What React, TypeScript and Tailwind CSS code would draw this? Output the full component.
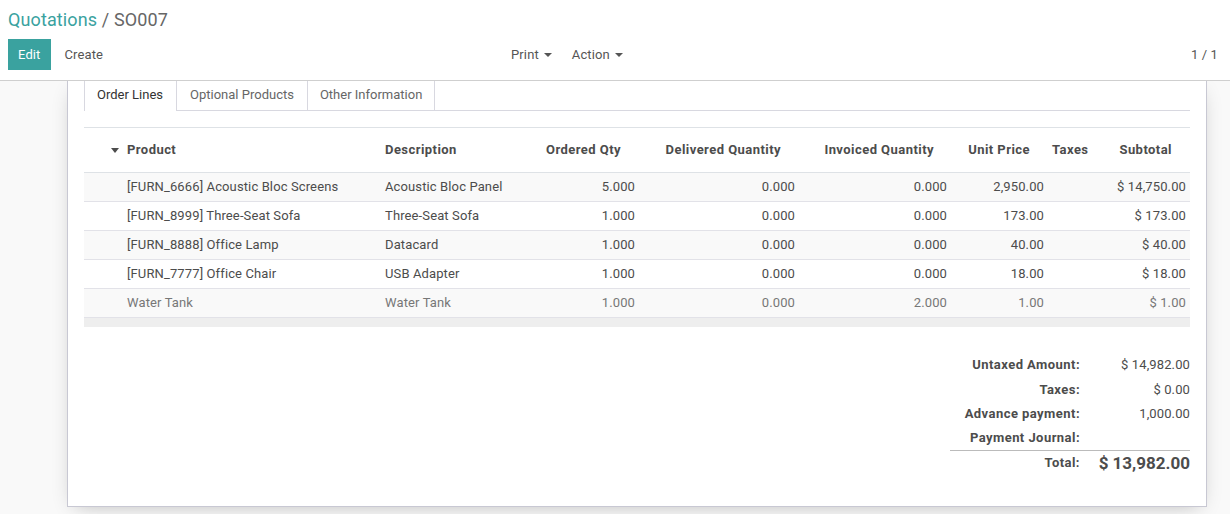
import React from 'react';

type Line = {
  product: string;
  description: string;
  ordered: string;
  delivered: string;
  invoiced: string;
  price: string;
  subtotal: string;
  muted?: boolean;
};

const lines: Line[] = [
  { product: '[FURN_6666] Acoustic Bloc Screens', description: 'Acoustic Bloc Panel', ordered: '5.000', delivered: '0.000', invoiced: '0.000', price: '2,950.00', subtotal: '$ 14,750.00' },
  { product: '[FURN_8999] Three-Seat Sofa', description: 'Three-Seat Sofa', ordered: '1.000', delivered: '0.000', invoiced: '0.000', price: '173.00', subtotal: '$ 173.00' },
  { product: '[FURN_8888] Office Lamp', description: 'Datacard', ordered: '1.000', delivered: '0.000', invoiced: '0.000', price: '40.00', subtotal: '$ 40.00' },
  { product: '[FURN_7777] Office Chair', description: 'USB Adapter', ordered: '1.000', delivered: '0.000', invoiced: '0.000', price: '18.00', subtotal: '$ 18.00' },
  { product: 'Water Tank', description: 'Water Tank', ordered: '1.000', delivered: '0.000', invoiced: '2.000', price: '1.00', subtotal: '$ 1.00', muted: true },
];

const cols = 'grid grid-cols-[293px_158px_104px_160px_152px_97px_46px_96px]';

const Caret = () => (
  <span className="inline-block w-0 h-0 border-t-[4px] border-x-[4px] border-x-transparent border-t-[#555] ml-[5px] align-middle" />
);

const totals = [
  { label: 'Untaxed Amount:', value: '$ 14,982.00' },
  { label: 'Taxes:', value: '$ 0.00' },
  { label: 'Advance payment:', value: '1,000.00' },
  { label: 'Payment Journal:', value: '' },
];

export default function App() {
  return (
    <div className="h-[514px] flex flex-col overflow-hidden bg-white font-['Roboto',sans-serif] text-[13px] tracking-[0.12px] text-[#4c4c4c]">
      {/* Control panel */}
      <div className="h-[81px] shrink-0 border-b border-[#cfcfcf] px-2 bg-white">
        <div className="pt-[8px] text-[18px] leading-[24px]">
          <span className="text-[#3aa29f]">Quotations</span>
          <span className="text-[#666]"> / SO007</span>
        </div>
        <div className="mt-[7px] flex items-center h-[31px]">
          <div className="flex items-center w-[493px]">
            <button className="h-[31px] px-[10px] bg-[#3aa29f] text-white">Edit</button>
            <button className="h-[31px] px-[14px] text-[#555]">Create</button>
          </div>
          <div className="flex items-center text-[#555]">
            <button className="h-[31px] px-[10px] flex items-center">Print<Caret /></button>
            <button className="h-[31px] px-[10px] flex items-center">Action<Caret /></button>
          </div>
          <div className="ml-auto pr-[4px] text-[#555]">1 / 1</div>
        </div>
      </div>

      {/* Form view */}
      <div className="flex-1 overflow-hidden bg-[#f9f9f9]">
        <div className="ml-[67px] w-[1140px] bg-white border-x border-b border-[#c8c8d3] shadow-[0_5px_20px_-8px_rgba(0,0,0,0.3)] px-4 pb-[31px]">
          {/* Tabs */}
          <div className="flex h-[30px] tracking-normal">
            <div className="pl-[12px] pr-[13px] flex items-center pb-[2px] border-x border-[#d8d8e0] text-[#333] bg-white">Order Lines</div>
            <div className="px-[13px] flex items-center pb-[2px] border-r border-b border-[#d8d8e0] text-[#666]">Optional Products</div>
            <div className="px-[12px] flex items-center pb-[2px] border-r border-b border-[#d8d8e0] text-[#666]">Other Information</div>
            <div className="flex-1 border-b border-[#d8d8e0]" />
          </div>

          {/* Order lines */}
          <div className="mt-[16px]">
            <div className={`${cols} h-[46px] items-center border-y border-[#dee2e6] font-bold tracking-[0.45px]`}>
              <div className="pl-[27px] flex items-center">
                <span className="inline-block w-0 h-0 border-t-[5px] border-x-[4px] border-x-transparent border-t-[#4c4c4c] mr-[8px]" />
                Product
              </div>
              <div className="pl-2">Description</div>
              <div className="text-right pr-[18px]">Ordered Qty</div>
              <div className="text-right pr-[18px]">Delivered Quantity</div>
              <div className="text-right pr-[17px]">Invoiced Quantity</div>
              <div className="text-right pr-[18px]">Unit Price</div>
              <div className="pl-1">Taxes</div>
              <div className="text-right pr-[18px]">Subtotal</div>
            </div>
            {lines.map((l, i) => (
              <div
                key={i}
                className={`${cols} h-[29px] items-center border-b border-[#e2e2e8] ${i % 2 === 0 ? 'bg-[#f9f9f9]' : 'bg-white'} ${l.muted ? 'text-[#777]' : ''}`}
              >
                <div className="pl-[43px] truncate">{l.product}</div>
                <div className="pl-2 truncate">{l.description}</div>
                <div className="text-right pr-1">{l.ordered}</div>
                <div className="text-right pr-1">{l.delivered}</div>
                <div className="text-right pr-1">{l.invoiced}</div>
                <div className="text-right pr-1">{l.price}</div>
                <div />
                <div className="text-right pr-1">{l.subtotal}</div>
              </div>
            ))}
            <div className="h-[9px] bg-[#eeeeee]" />
          </div>

          {/* Totals */}
          <div className="mt-[26px] flex justify-end">
            <div className="w-[240px]">
              {totals.map((t) => (
                <div key={t.label} className="grid grid-cols-[130px_110px] h-[24.25px] items-center">
                  <div className="text-right font-bold tracking-[0.45px]">{t.label}</div>
                  <div className="text-right">{t.value}</div>
                </div>
              ))}
              <div className="grid grid-cols-[130px_110px] h-[25px] items-center border-t border-[#bbb]">
                <div className="text-right font-bold tracking-[0.45px]">Total:</div>
                <div className="text-right font-bold text-[17px] leading-[22px] tracking-normal">$ 13,982.00</div>
              </div>
            </div>
          </div>
        </div>
      </div>
    </div>
  );
}
